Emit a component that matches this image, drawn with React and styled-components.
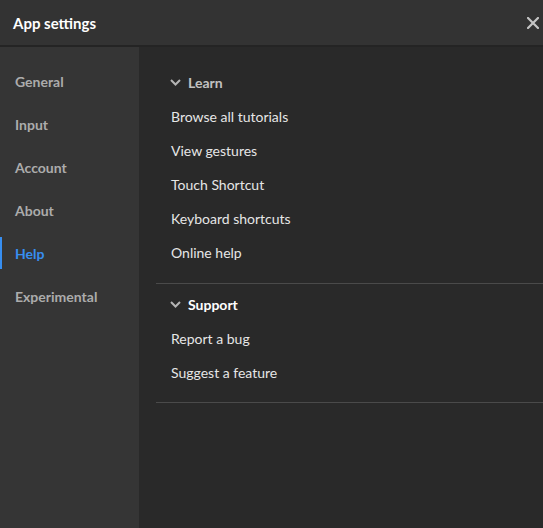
import React from 'react';
import styled, { createGlobalStyle } from 'styled-components';

const GlobalStyle = createGlobalStyle`
  html, body {
    margin: 0;
    padding: 0;
    background: #292929;
  }
  body {
    font-family: Lato, "Open Sans", sans-serif;
    -webkit-font-smoothing: antialiased;
  }
`;

const navItems = ['General', 'Input', 'Account', 'About', 'Help', 'Experimental'];

const sections = [
  {
    title: 'Learn',
    muted: true,
    items: ['Browse all tutorials', 'View gestures', 'Touch Shortcut', 'Keyboard shortcuts', 'Online help'],
  },
  {
    title: 'Support',
    items: ['Report a bug', 'Suggest a feature'],
  },
];

const App = () => (
  <Page>
    <GlobalStyle />
    <Header>
      <Title>App settings</Title>
      <CloseButton aria-label="Close">
        <svg width="12" height="12" viewBox="0 0 12 12">
          <path d="M1 1L11 11M11 1L1 11" stroke="currentColor" strokeWidth="2.2" strokeLinecap="square" />
        </svg>
      </CloseButton>
    </Header>
    <Body>
      <Sidebar>
        {navItems.map(item => (
          <NavItem key={item} active={item === 'Help'}>
            {item}
          </NavItem>
        ))}
      </Sidebar>
      <Content>
        {sections.map(section => (
          <Section key={section.title}>
            <SectionHeader muted={section.muted}>
              <Chevron width="11" height="7" viewBox="0 0 11 7">
                <path d="M1 1L5.5 5.5L10 1" fill="none" stroke="currentColor" strokeWidth="2" />
              </Chevron>
              {section.title}
            </SectionHeader>
            {section.items.map(item => (
              <LinkItem key={item}>{item}</LinkItem>
            ))}
          </Section>
        ))}
      </Content>
    </Body>
  </Page>
);

const Page = styled.div`
  width: 543px;
  height: 528px;
  display: flex;
  flex-direction: column;
  background: #292929;
  overflow: hidden;
`;

const Header = styled.header`
  height: 45px;
  flex-shrink: 0;
  padding: 0 2px 0 13px;
  display: flex;
  align-items: center;
  justify-content: space-between;
  background: #333333;
  border-bottom: 2px solid #242424;
`;

const Title = styled.h1`
  margin: 0;
  font-size: 15px;
  font-weight: 700;
  color: #ffffff;
`;

const CloseButton = styled.button`
  width: 16px;
  height: 16px;
  padding: 0;
  display: flex;
  align-items: center;
  justify-content: center;
  border: none;
  background: transparent;
  color: #c4c4c4;
  margin-top: 1px;
`;

const Body = styled.div`
  flex: 1;
  display: flex;
`;

const Sidebar = styled.nav`
  width: 139px;
  flex-shrink: 0;
  padding-top: 18px;
  display: flex;
  flex-direction: column;
  gap: 11px;
  background: #353535;
`;

const NavItem = styled.div`
  height: 32px;
  padding-left: ${props => (props.active ? '13px' : '15px')};
  display: flex;
  align-items: center;
  border-left: ${props => (props.active ? '2px solid #378ef0' : 'none')};
  font-size: 14px;
  font-weight: 700;
  color: ${props => (props.active ? '#378ef0' : '#acacac')};
`;

const Content = styled.main`
  flex: 1;
  padding: 14px 0 0 17px;
`;

const Section = styled.section`
  padding: 4px 0 14px;
  border-bottom: 1px solid #4a4a4a;

  & + & {
    padding: 3px 0 13px;
  }
`;

const SectionHeader = styled.div`
  height: 34px;
  padding-left: 14px;
  display: flex;
  align-items: center;
  gap: 7px;
  font-size: 14px;
  font-weight: 700;
  color: ${props => (props.muted ? '#c2c2c2' : '#ffffff')};
`;

const Chevron = styled.svg`
  color: #b4b4b4;
  margin-top: 1px;
`;

const LinkItem = styled.div`
  height: 34px;
  padding-left: 15px;
  display: flex;
  align-items: center;
  font-size: 14px;
  color: #e6e6e6;
`;

export default App;
